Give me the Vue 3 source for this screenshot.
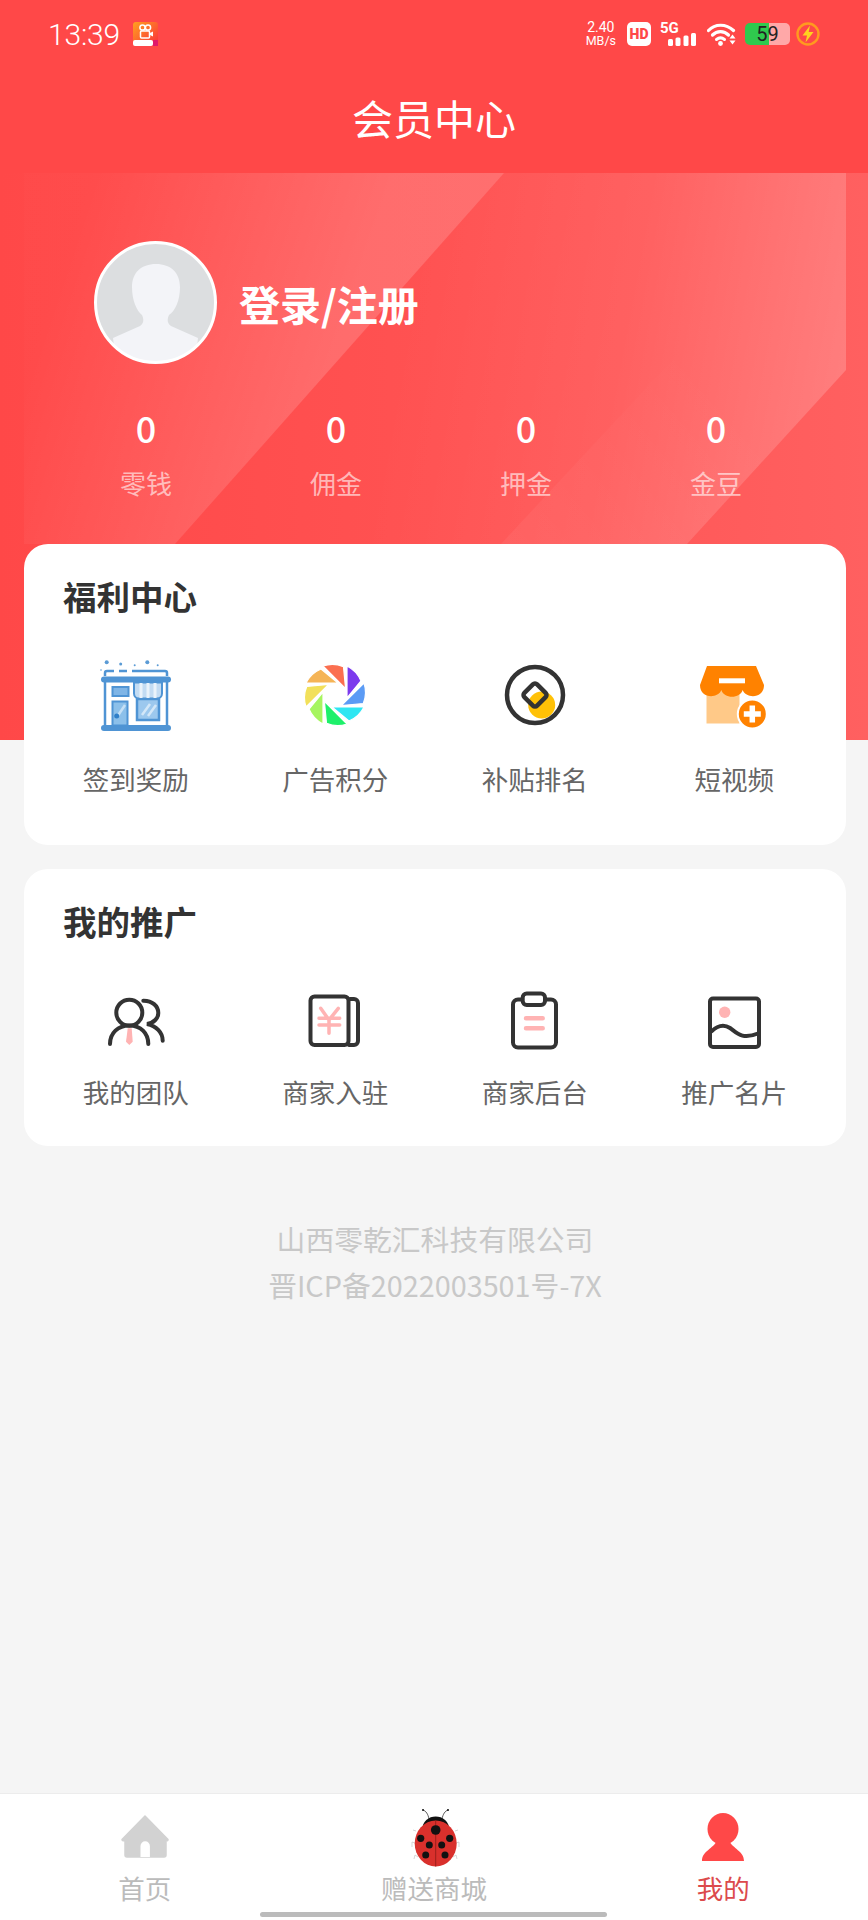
<template>
  <div class="page">
    <!-- 顶部状态栏 + 标题 -->
    <header class="top">
      <div class="status-bar">
        <div class="status-left">
          <span class="time">13:39</span>
          <svg class="app-icon" width="25" height="24" viewBox="0 0 25 24">
            <defs>
              <linearGradient id="appBg" x1="0" y1="0" x2="1" y2="1">
                <stop offset="0" stop-color="#ffa21f" />
                <stop offset="1" stop-color="#fb2b3c" />
              </linearGradient>
            </defs>
            <rect width="25" height="24" rx="3" fill="url(#appBg)" />
            <circle cx="9.5" cy="5.5" r="2.6" fill="none" stroke="#fff" stroke-width="1.5" />
            <circle cx="15" cy="5.5" r="2.6" fill="none" stroke="#fff" stroke-width="1.5" />
            <rect x="7.5" y="9" width="9" height="7" rx="1" fill="none" stroke="#fff" stroke-width="1.5" />
            <path d="M17 11l3-1.5v5L17 13z" fill="#fff" />
            <rect x="0" y="18" width="20" height="6" rx="2" fill="#fff" />
            <rect x="20" y="18" width="5" height="6" fill="#e01a6a" />
          </svg>
        </div>
        <div class="status-right">
          <div class="speed"><span>2.40</span><span class="speed-unit">MB/s</span></div>
          <span class="hd">HD</span>
          <div class="signal">
            <span class="five-g">5G</span>
            <svg width="28" height="13" viewBox="0 0 28 13">
              <rect x="0" y="6" width="5" height="7" rx="1.5" fill="#fff" />
              <rect x="7.5" y="4.500" width="5" height="8.500" rx="1.5" fill="#fff" />
              <rect x="15.500" y="2.500" width="5" height="10.500" rx="1.5" fill="#fff" />
              <rect x="23" y="0" width="5" height="13" rx="1.5" fill="#fff" />
            </svg>
          </div>
          <svg class="wifi" width="29" height="23" viewBox="0 0 29 23">
            <path d="M1.5 7.5C8 0.500 19 0.500 26.500 7.500" fill="none" stroke="#fff" stroke-width="3.200" stroke-linecap="round" />
            <path d="M5.5 12C10 7.500 17 7.500 21.500 12" fill="none" stroke="#fff" stroke-width="3.200" stroke-linecap="round" />
            <path d="M9.5 16.500C12 14.500 15 14.500 17.500 16.500" fill="none" stroke="#fff" stroke-width="3" stroke-linecap="round" />
            <circle cx="13.500" cy="20.500" r="2.400" fill="#fff" />
            <path d="M25.500 11.500l3 4h-6zM22.500 17.500h6l-3 4z" fill="#fff" />
          </svg>
          <div class="battery">
            <span class="battery-level">59</span>
          </div>
          <svg class="charge" width="24" height="24" viewBox="0 0 24 24">
            <circle cx="12" cy="12" r="10.5" fill="none" stroke="#ff9a1f" stroke-width="2.4" />
            <path d="M14 3.5L6.5 13.5h4.5L9.5 20.5l8-10.5h-4.8z" fill="#ffd21f" />
          </svg>
        </div>
      </div>
      <h1 class="page-title">会员中心</h1>
    </header>

    <!-- 红色头部 -->
    <section class="hero">
      <svg class="hero-deco" width="868" height="567" viewBox="0 0 868 567">
        <defs>
          <linearGradient id="panelA" gradientUnits="userSpaceOnUse" x1="60" y1="100" x2="330" y2="190">
            <stop offset="0" stop-color="#fff" stop-opacity="0.01" />
            <stop offset="1" stop-color="#fff" stop-opacity="0.16" />
          </linearGradient>
          <linearGradient id="panelB" gradientUnits="userSpaceOnUse" x1="400" y1="150" x2="840" y2="230">
            <stop offset="0" stop-color="#fff" stop-opacity="0" />
            <stop offset="0.5" stop-color="#fff" stop-opacity="0.05" />
            <stop offset="1" stop-color="#fff" stop-opacity="0.19" />
          </linearGradient>
          <linearGradient id="panelC" gradientUnits="userSpaceOnUse" x1="500" y1="371" x2="700" y2="190">
            <stop offset="0" stop-color="#fff" stop-opacity="0.05" />
            <stop offset="1" stop-color="#fff" stop-opacity="0" />
          </linearGradient>
        </defs>
        <polygon points="24,0 504,0 175,371 24,371" fill="url(#panelA)" />
        <polygon points="504,0 846,0 846,197 687,371 175,371" fill="url(#panelB)" />
        <polygon points="501,371 846,0 846,197 687,371" fill="url(#panelC)" />
      </svg>

      <div class="profile">
        <svg class="avatar" width="123" height="123" viewBox="0 0 123 123">
          <defs>
            <clipPath id="avatarClip"><circle cx="61.5" cy="61.5" r="60" /></clipPath>
          </defs>
          <circle cx="61.5" cy="61.5" r="60" fill="#dcdee0" />
          <path
            clip-path="url(#avatarClip)"
            d="M62 23C47 23 38 32 38 46C38 60 43 70 48 74C50 78 50 82 46 85L19 97L22 123H101L104 97L77 85C73 82 73 78 75 74C81 70 86 60 86 46C86 32 77 23 62 23Z"
            fill="#f3f4f8"
          />
          <circle cx="61.5" cy="61.5" r="60" fill="none" stroke="#fff" stroke-width="3" />
        </svg>
        <div class="login-text">登录/注册</div>
      </div>

      <div class="stats">
        <div class="stat" v-for="item in stats" :key="item.label">
          <div class="stat-num">{{ item.value }}</div>
          <div class="stat-label">{{ item.label }}</div>
        </div>
      </div>
    </section>

    <main class="content">
      <!-- 福利中心 -->
      <section class="card card-welfare">
        <h2 class="card-title">福利中心</h2>
        <div class="grid">
          <div class="cell">
            <svg class="icon-lg" viewBox="0 0 80 80">
              <g fill="#5b9bd5">
                <circle cx="10.700" cy="7.300" r="2" />
                <circle cx="24.700" cy="9" r="1.500" />
                <circle cx="38.700" cy="10.300" r="1" />
                <circle cx="51.300" cy="7.300" r="2" />
                <circle cx="61.700" cy="10.300" r="1" />
                <circle cx="5" cy="15" r="0.800" />
              </g>
              <g fill="none" stroke="#4f94d4" stroke-width="2.500">
                <path d="M9 21v-3a2 2 0 0 1 2-2h7M23 16h8M36 16h33a2 2 0 0 1 2 2v3" />
                <path d="M9 27v46M71 27v46" />
              </g>
              <rect x="5" y="21.500" width="70" height="6" rx="3" fill="#4f94d4" />
              <rect x="5" y="70" width="70" height="6" rx="3" fill="#4f94d4" />
              <rect x="16.500" y="32" width="16" height="9" fill="#7fb5e6" stroke="#4f94d4" stroke-width="2" />
              <rect x="16.500" y="46.500" width="15" height="24" fill="#8cc0ea" stroke="#4f94d4" stroke-width="2" />
              <path d="M21 62l8-12" stroke="#c5e0f6" stroke-width="2.500" />
              <circle cx="20.700" cy="61" r="2.500" fill="#2f7fc9" />
              <rect x="41" y="44" width="22" height="21" fill="#9cc8ee" stroke="#4f94d4" stroke-width="2.500" />
              <path d="M46 60l8-11M52 61l8-11" stroke="#d3e7f8" stroke-width="2.500" />
              <path d="M38 27.500h28v11a5 5 0 0 1-5 5H43a5 5 0 0 1-5-5z" fill="#c3dcf3" stroke="#4f94d4" stroke-width="2" />
              <path d="M45 28v15M52 28v15M59 28v15" stroke="#eaf3fb" stroke-width="3" />
            </svg>
            <div class="cell-label">签到奖励</div>
          </div>
          <div class="cell">
            <svg class="icon-lg" viewBox="0 0 80 80">
              <path
                v-for="(color, i) in bladeColors"
                :key="color"
                d="M52 11L52 43L66 26A29.500 29.500 0 0 0 52 11Z"
                :fill="color"
                stroke="#fff"
                stroke-width="1.200"
                stroke-linejoin="round"
                :transform="`rotate(${i * 45} 40 40)`"
              />
            </svg>
            <div class="cell-label">广告积分</div>
          </div>
          <div class="cell">
            <svg class="icon-lg" viewBox="0 0 80 80">
              <circle cx="46.700" cy="50" r="13.500" fill="#ffc107" />
              <circle cx="40" cy="40" r="28" fill="none" stroke="#333" stroke-width="4.500" />
              <rect x="31" y="31" width="18" height="18" rx="3" fill="none" stroke="#333" stroke-width="4.500" transform="rotate(45 40 40)" />
            </svg>
            <div class="cell-label">补贴排名</div>
          </div>
          <div class="cell">
            <svg class="icon-lg" viewBox="0 0 80 80">
              <rect x="12.500" y="30" width="33" height="38.500" fill="#ffc988" />
              <path d="M13 11H62L70 30C70 44 52 44 48.700 35C46 44 30 44 27.300 35C24 44 6 44 6 30Z" fill="#ff8200" />
              <rect x="25" y="23.300" width="26" height="5" fill="#fff" />
              <circle cx="58.300" cy="59" r="14.500" fill="#ff8200" stroke="#fff" stroke-width="2" />
              <path d="M58.300 50.500v17M49.800 59h17" stroke="#fff" stroke-width="5.500" />
            </svg>
            <div class="cell-label">短视频</div>
          </div>
        </div>
      </section>

      <!-- 我的推广 -->
      <section class="card card-promo">
        <h2 class="card-title">我的推广</h2>
        <div class="grid">
          <div class="cell">
            <svg class="icon-sm" viewBox="0 0 60 60">
              <path d="M21.700 38.300h4L26.700 51.700L23.300 55L20 51.700Z" fill="#ffb3b3" />
              <g fill="none" stroke="#333" stroke-width="4" stroke-linecap="round">
                <circle cx="23.300" cy="22.700" r="13" />
                <path d="M4 54C4 43 12 35.500 23.300 35.500S42.300 43 42.300 54" />
                <path d="M37.300 10.700C46 10.500 52.300 16 52.300 23C52.300 28 48 33 41 34C50 36 56.700 42 56.700 50.700" />
              </g>
            </svg>
            <div class="cell-label">我的团队</div>
          </div>
          <div class="cell">
            <svg class="icon-sm" viewBox="0 0 60 60">
              <g fill="none" stroke="#333" stroke-width="4" stroke-linecap="round">
                <rect x="5.500" y="6.500" width="38" height="48.500" rx="4" />
                <path d="M45 9h4a4 4 0 0 1 4 4v38a4 4 0 0 1-4 4h-5" />
              </g>
              <path d="M15.700 18.300L24 30L33.300 18.300M14 28.300H34.700M14 35H34.700M24 30V43.300" fill="none" stroke="#ffb3b3" stroke-width="3.500" stroke-linecap="round" />
            </svg>
            <div class="cell-label">商家入驻</div>
          </div>
          <div class="cell">
            <svg class="icon-sm" viewBox="0 0 60 60">
              <rect x="8" y="9.500" width="43" height="48" rx="5" fill="none" stroke="#333" stroke-width="4" />
              <rect x="17.700" y="3.500" width="22.300" height="11.500" rx="4" fill="#fff" stroke="#333" stroke-width="4" />
              <path d="M21 28.300H37.700M21 38.300H37.700" stroke="#ffb3b3" stroke-width="4.500" stroke-linecap="round" />
            </svg>
            <div class="cell-label">商家后台</div>
          </div>
          <div class="cell">
            <svg class="icon-sm" viewBox="0 0 60 60">
              <circle cx="20.700" cy="22.300" r="5.700" fill="#ffb3b3" />
              <rect x="6" y="8.500" width="49" height="48.500" rx="3" fill="none" stroke="#333" stroke-width="4" />
              <path d="M7 41.700C14 35 20 34 26 38C33 43 38 50 54 43.500" fill="none" stroke="#333" stroke-width="4" />
            </svg>
            <div class="cell-label">推广名片</div>
          </div>
        </div>
      </section>

      <footer class="copyright">
        <div>山西零乾汇科技有限公司</div>
        <div>晋ICP备2022003501号-7X</div>
      </footer>
    </main>

    <!-- 底部导航 -->
    <nav class="tabbar">
      <div class="tab">
        <svg class="tab-icon" viewBox="0 0 60 60">
          <path d="M30 7L53 30.500Q53 32 51 32V46a2 2 0 0 1-2 2H12a2 2 0 0 1-2-2V32Q7 32 7 30.500Z" fill="#d2d2d2" stroke="#d2d2d2" stroke-width="1.500" stroke-linejoin="round" />
          <path d="M25.500 48V37a4.700 4.700 0 0 1 9.400 0V48Z" fill="#fff" />
        </svg>
        <span class="tab-label">首页</span>
      </div>
      <div class="tab">
        <svg class="tab-icon" viewBox="0 0 60 60">
          <g transform="translate(1 -2)">
            <g fill="none" stroke="#333" stroke-width="0.800">
              <path d="M24 12C23 7 21 4 18 3M37 12C38 7 40 4 43 3" />
            </g>
            <circle cx="18" cy="3" r="1" fill="#111" />
            <circle cx="43" cy="3" r="1" fill="#111" />
            <g fill="none" stroke="#c4c4c4" stroke-width="0.700">
              <path d="M11 24L8 23M10 36L7 35L7 40M13 50L10 48L9 52M50 24L53 23M51 36L54 35L54 40M48 50L51 48L52 52" />
            </g>
            <path d="M17 24C17 14 24 9.500 30.700 9.500S44.500 14 44.500 24Z" fill="#111" />
            <ellipse cx="30.700" cy="36.500" rx="21" ry="23" fill="#d9302c" />
            <path d="M30.700 13.500V59.500" stroke="#8c1a18" stroke-width="0.800" />
            <g fill="#111">
              <circle cx="30.700" cy="23" r="4.800" />
              <circle cx="15.700" cy="31.300" r="3.600" />
              <circle cx="44.700" cy="31.300" r="3.600" />
              <circle cx="24.300" cy="38" r="3.500" />
              <circle cx="36.700" cy="38" r="3.500" />
              <circle cx="20.700" cy="48" r="3.500" />
              <circle cx="40" cy="48" r="3.500" />
            </g>
          </g>
        </svg>
        <span class="tab-label">赠送商城</span>
      </div>
      <div class="tab tab-active">
        <svg class="tab-icon" viewBox="0 0 60 60">
          <ellipse cx="30" cy="20" rx="15.500" ry="16" fill="#ff4848" />
          <path d="M9 52C9 42 20 40 24.500 31H35.500C40 40 51 42 51 52Z" fill="#ff4848" />
        </svg>
        <span class="tab-label">我的</span>
      </div>
      <div class="home-bar"></div>
    </nav>
  </div>
</template>

<script setup>
// 顶部资产数据
const stats = [
  { label: '零钱', value: 0 },
  { label: '佣金', value: 0 },
  { label: '押金', value: 0 },
  { label: '金豆', value: 0 }
];

// 光圈图标的八个叶片颜色（从右上角顺时针）
const bladeColors = [
  '#7c3aed',
  '#5b9bf5',
  '#2fe6f2',
  '#1ef06a',
  '#a6f55f',
  '#f2e05a',
  '#f5b456',
  '#fb6f50'
];
</script>

<style>
html,
body {
  background: #f5f5f5;
}
</style>

<style scoped>
.page {
  display: flex;
  flex-direction: column;
  width: 868px;
  height: 1920px;
  overflow: hidden;
  background: #f5f5f5;
  font-family: "Noto Sans CJK SC", "Noto Sans", sans-serif;
}

.top {
  background: #ff4848;
  color: #fff;
  height: 173px;
}

.status-bar {
  display: flex;
  justify-content: space-between;
  align-items: center;
  height: 68px;
  padding: 0 48px;
}

.status-left,
.status-right {
  display: flex;
  align-items: center;
}

.time {
  font-family: Roboto, sans-serif;
  font-size: 30px;
  font-weight: 300;
  letter-spacing: -0.2px;
  margin-right: 13px;
}

.speed {
  display: flex;
  flex-direction: column;
  align-items: center;
  font-family: Roboto, sans-serif;
  font-size: 14px;
  line-height: 13px;
  margin-right: 11px;
}

.speed-unit {
  font-size: 12.500px;
}

.hd {
  width: 24px;
  height: 24px;
  border-radius: 5px;
  background: #fff;
  color: #ff4848;
  font-family: Roboto, sans-serif;
  font-size: 14px;
  font-weight: 900;
  line-height: 24px;
  text-align: center;
  margin-right: 9px;
}

.signal {
  display: flex;
  flex-direction: column;
  align-items: flex-start;
  width: 36px;
  height: 24px;
  margin-right: 11px;
}

.signal svg {
  display: block;
  margin: -1px 0 0 8px;
}

.five-g {
  font-family: Roboto, sans-serif;
  font-size: 15px;
  font-weight: 700;
  line-height: 12px;
}

.wifi {
  margin-right: 9px;
}

.battery {
  width: 45px;
  height: 22px;
  border-radius: 5px;
  background: linear-gradient(to right, #2fc94e 0 53%, #ffa8a8 53% 100%);
  color: #222;
  font-family: Roboto, sans-serif;
  font-size: 20px;
  line-height: 22px;
  text-align: center;
  margin-right: 6px;
}

.page-title {
  margin: 0;
  height: 105px;
  font-size: 41px;
  font-weight: 400;
  line-height: 98px;
  text-align: center;
}

.hero {
  position: relative;
  height: 567px;
  background: linear-gradient(to right, #ff4848, #ff5252 50%, #ff6060);
  color: #fff;
}

.hero-deco {
  position: absolute;
  top: 0;
  left: 0;
}

.profile {
  position: relative;
  display: flex;
  align-items: center;
  gap: 22px;
  padding: 68px 0 0 94px;
}

.avatar {
  display: block;
  flex-shrink: 0;
}

.login-text {
  font-size: 41px;
  font-weight: 700;
  line-height: 56px;
}

.stats {
  position: relative;
  display: grid;
  grid-template-columns: repeat(4, 190px);
  padding: 41px 0 0 51px;
  text-align: center;
}

.stat-num {
  font-size: 36px;
  font-weight: 500;
  line-height: 44px;
}

.stat-label {
  margin-top: 16px;
  font-size: 26px;
  line-height: 36px;
  color: rgba(255, 255, 255, 0.6);
}

.content {
  position: relative;
  flex: 1;
  margin-top: -196px;
  padding: 0 22px 0 24px;
}

.card {
  box-sizing: border-box;
  background: #fff;
  border-radius: 24px;
  padding: 29px 12px 0;
}

.card-welfare {
  height: 301px;
}

.card-promo {
  height: 277px;
  margin-top: 24px;
}

.card-title {
  margin: 0 0 0 27px;
  font-size: 33.500px;
  font-weight: 700;
  line-height: 46px;
  color: #333;
}

.grid {
  display: grid;
  grid-template-columns: repeat(4, 1fr);
}

.cell {
  display: flex;
  flex-direction: column;
  align-items: center;
}

.card-welfare .grid {
  margin-top: 36px;
}

.card-promo .grid {
  margin-top: 46px;
}

.icon-lg {
  display: block;
  width: 80px;
  height: 80px;
  margin-bottom: 26px;
}

.icon-sm {
  display: block;
  width: 60px;
  height: 60px;
  margin-bottom: 24px;
}

.cell-label {
  font-size: 26.500px;
  line-height: 36px;
  color: #666;
}

.copyright {
  margin-top: 70px;
  font-size: 28.800px;
  line-height: 46px;
  text-align: center;
  color: #c8c8c8;
}

.tabbar {
  position: relative;
  display: flex;
  flex-shrink: 0;
  height: 127px;
  border-top: 1px solid #ececec;
  background: #fff;
  box-sizing: border-box;
}

.tab {
  flex: 1;
  display: flex;
  flex-direction: column;
  align-items: center;
  padding-top: 15px;
}

.tab-icon {
  display: block;
  width: 60px;
  height: 60px;
  overflow: visible;
}

.tab-label {
  margin-top: 1px;
  font-size: 26.500px;
  line-height: 36px;
  color: #bbb;
}

.tab-active .tab-label {
  color: #dc4a4c;
}

.home-bar {
  position: absolute;
  left: 260px;
  bottom: 3px;
  width: 347px;
  height: 5px;
  border-radius: 3px;
  background: #bbb;
}
</style>
